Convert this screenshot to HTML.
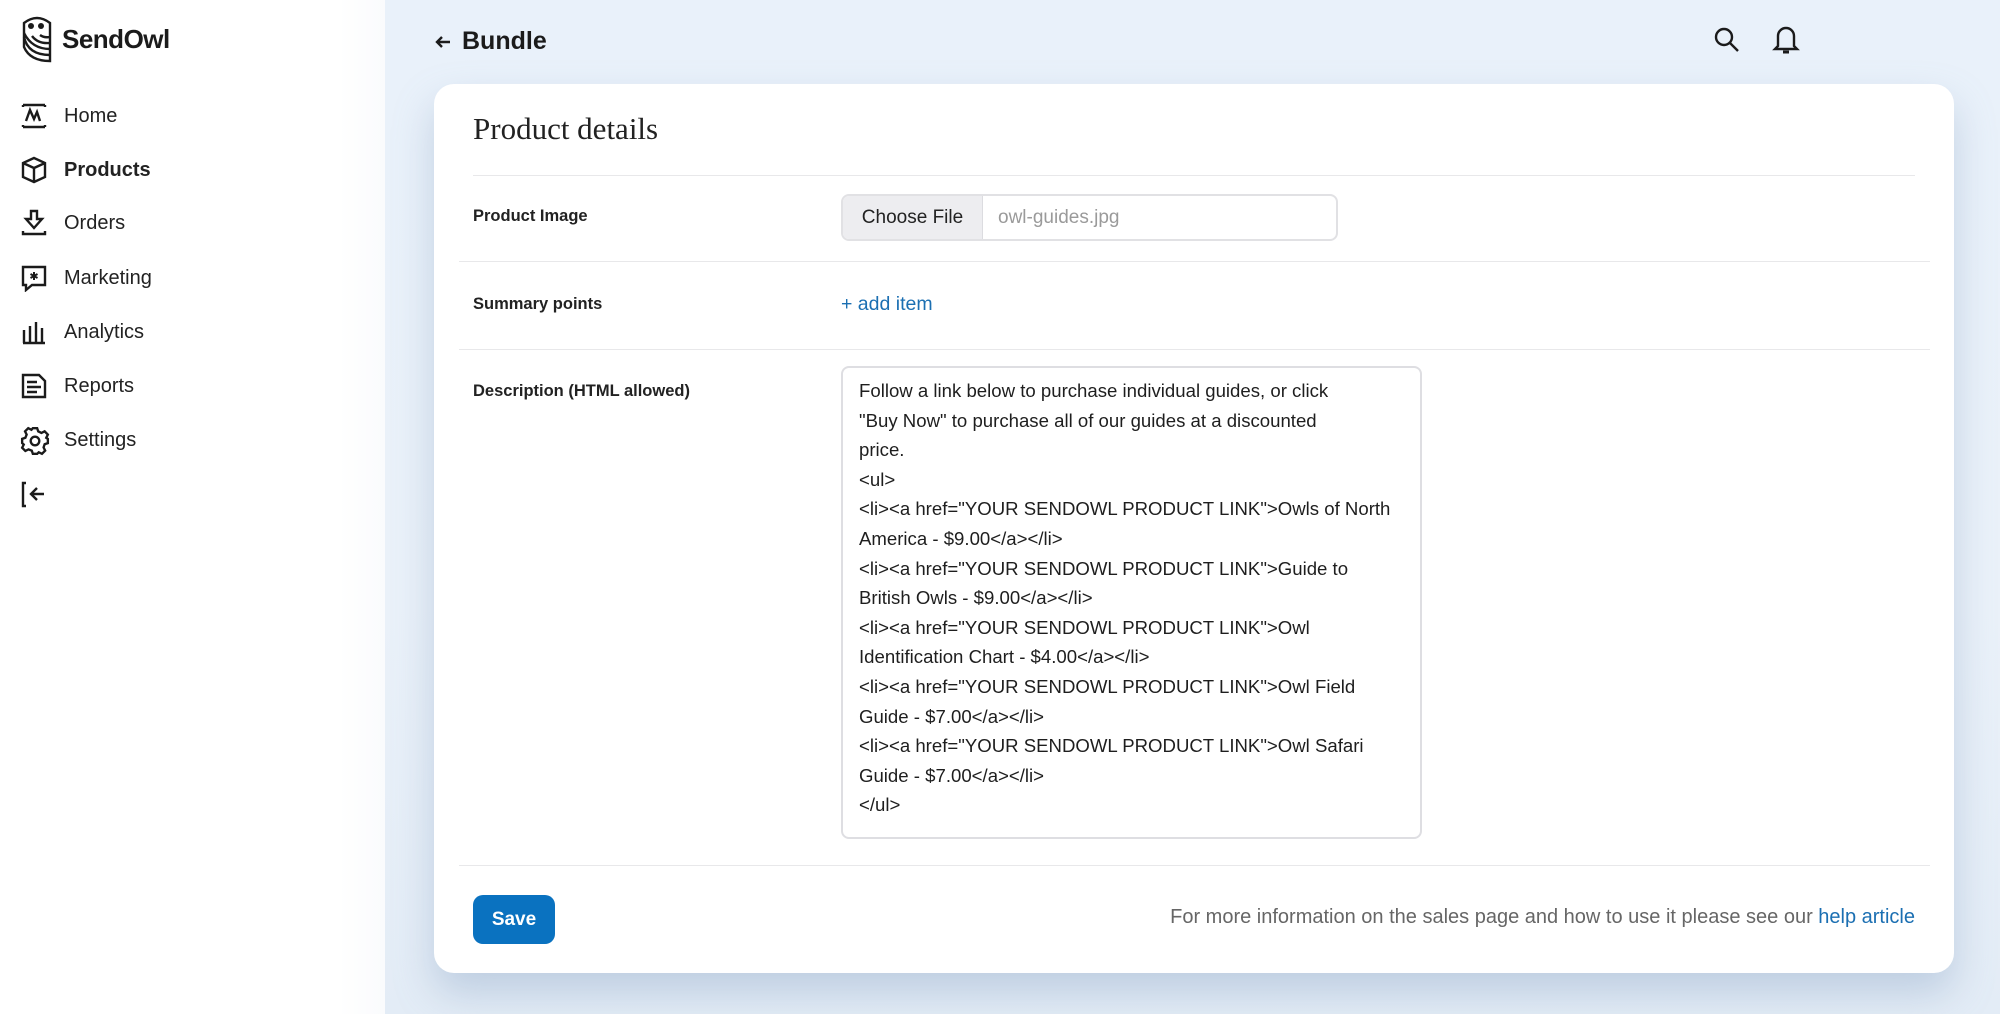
<!DOCTYPE html>
<html><head><meta charset="utf-8"><style>
*{box-sizing:border-box;margin:0;padding:0}
body{width:2000px;height:1014px;overflow:hidden;font-family:"Liberation Sans",sans-serif;color:#1b1b1b;background:linear-gradient(180deg,#e9f1fa 0%,#eaf1f9 60%,#e3ecf6 100%);position:relative}
.side{position:absolute;left:0;top:0;width:385px;height:1014px;background:linear-gradient(90deg,#fff 0%,#fff 88%,#fafbfd 100%)}
.logo{position:absolute;left:20px;top:15px}
.brand{position:absolute;left:62px;top:24px;font-size:26px;font-weight:bold;letter-spacing:-0.5px}
.nav{position:absolute;left:0;width:385px;height:40px}
.nav svg{position:absolute;left:20px;top:6px}
.nav span{position:absolute;left:64px;top:9px;font-size:20px;color:#222}
.hdr{position:absolute;left:434px;top:27px;font-size:25px;font-weight:bold;display:flex;align-items:center}
.card{position:absolute;left:434px;top:84px;width:1520px;height:889px;background:#fff;border-radius:20px;box-shadow:0 20px 40px rgba(120,150,185,.35)}
.h1{position:absolute;left:39px;top:27px;font-family:"Liberation Serif",serif;font-size:31px;color:#222}
.hr{position:absolute;height:1px;background:#e8e8ea}
.lbl{position:absolute;left:39px;font-size:16.5px;font-weight:bold;color:#222}
.file{position:absolute;left:407px;top:110px;width:497px;height:47px;border:2px solid #e1e1e4;border-radius:8px;overflow:hidden}
.file .b{position:absolute;left:0;top:0;width:140px;height:100%;background:#ededf0;border-right:1px solid #dcdce0;font-size:19px;line-height:43px;text-align:center;color:#222}
.file .n{position:absolute;left:155px;top:0;line-height:43px;font-size:19px;color:#9a9a9a}
.add{position:absolute;left:407px;top:209px;font-size:19.5px;color:#1b6fb2}
.ta{position:absolute;left:407px;top:282px;width:581px;height:473px;border:2px solid #dedee2;border-radius:8px;padding:8px 0 0 16px;font-size:18.6px;line-height:29.6px;white-space:pre;color:#1e1e1e}
.save{position:absolute;left:39px;top:811px;width:82px;height:49px;background:#0a72c0;border-radius:10px;color:#fff;font-weight:bold;font-size:19px;text-align:center;line-height:49px}
.foot{position:absolute;right:39px;top:822px;font-size:20px;color:#666}
.foot a{color:#1b6fb2;text-decoration:none}
</style></head><body>
<div class="side">
<svg class="logo" width="34" height="48" viewBox="0 0 34 48" fill="none" stroke="#1b1b1b" stroke-width="2.4">
<path d="M4 8 Q17 -2 30 8 L30 46 Q10 46 4 32 Z"/>
<circle cx="11" cy="11" r="3" fill="#1b1b1b" stroke="none"/><circle cx="21" cy="11" r="3" fill="#1b1b1b" stroke="none"/>
<path d="M4 22 Q8 40 30 40"/><path d="M4 18 Q12 34 30 34"/><path d="M12 21 Q18 29 30 28"/><path d="M20 20 Q24 23 30 22"/>
</svg>
<div class="brand">SendOwl</div>
<div class="nav" style="top:96px"><svg width="28" height="28" viewBox="0 0 28 28" fill="none" stroke="#1b1b1b" stroke-width="2.4"><path d="M3 3h22M3 3v2M25 3v2M3 25h22M3 25v-2M25 25v-2M6 19l4-11 4 9 3-7 3 9"/></svg><span>Home</span></div>
<div class="nav" style="top:150px"><svg width="28" height="28" viewBox="0 0 28 28" fill="none" stroke="#1b1b1b" stroke-width="2.4"><path d="M14 2 25 7v14l-11 5-11-5V7z M3 7l11 5 11-5 M14 12v14"/></svg><span style="font-weight:bold">Products</span></div>
<div class="nav" style="top:203px"><svg width="28" height="28" viewBox="0 0 28 28" fill="none" stroke="#1b1b1b" stroke-width="2.4"><path d="M11 2h6v8h5l-8 9-8-9h5z M3 22v3h22v-3"/></svg><span>Orders</span></div>
<div class="nav" style="top:258px"><svg width="28" height="28" viewBox="0 0 28 28" fill="none" stroke="#1b1b1b" stroke-width="2.4"><path d="M3 3h22v18H12l-6 5v-5H3z"/><path d="M14 8v8M10.5 10l7 4M17.5 10l-7 4" stroke-width="2"/></svg><span>Marketing</span></div>
<div class="nav" style="top:312px"><svg width="28" height="28" viewBox="0 0 28 28" fill="none" stroke="#1b1b1b" stroke-width="2.4"><path d="M3 25h22M4 12v13M10 8v17M16 4v21M22 10v15"/></svg><span>Analytics</span></div>
<div class="nav" style="top:366px"><svg width="28" height="28" viewBox="0 0 28 28" fill="none" stroke="#1b1b1b" stroke-width="2.4"><path d="M3 3h16l6 6v16H3z M7 10h10M7 15h14M7 20h10"/></svg><span>Reports</span></div>
<div class="nav" style="top:420px"><svg width="30" height="30" viewBox="0 0 28 28" fill="none" stroke="#1b1b1b" stroke-width="2.2"><circle cx="14" cy="14" r="4"/><path d="M12 2h4l1 3 3 1.5 3-1.5 3 3-1.5 3L26 12v4l-3 1-1 3 1.5 3-3 3-3-1.5L16 26h-4l-1-3-3-1.2-3 1.5-3-3 1.5-3L2 16v-4l3-1 1.2-3-1.5-3 3-3 3 1.5z"/></svg><span>Settings</span></div>
<div class="nav" style="top:474px"><svg width="28" height="28" viewBox="0 0 28 28" fill="none" stroke="#1b1b1b" stroke-width="2.4"><path d="M6 3H3v23h3M24 14H12M17 8l-6 6 6 6"/></svg></div>
</div>
<div class="hdr"><svg width="18" height="18" viewBox="0 0 18 18" fill="none" stroke="#1b1b1b" stroke-width="2.4" style="margin-right:10px"><path d="M16 9H3M8 4 3 9l5 5"/></svg>Bundle</div>
<svg style="position:absolute;left:1713px;top:26px" width="28" height="28" viewBox="0 0 28 28" fill="none" stroke="#1b1b1b" stroke-width="2.4"><circle cx="11" cy="11" r="8"/><path d="M17 17l8 8"/></svg>
<svg style="position:absolute;left:1772px;top:24px" width="28" height="32" viewBox="0 0 28 32" fill="none" stroke="#1b1b1b" stroke-width="2.4"><path d="M6 22V12a8 8 0 0 1 16 0v10l3 3H3z"/><path d="M11 28h6" stroke-width="3"/></svg>
<div class="card">
<div class="h1">Product details</div>
<div class="hr" style="left:39px;right:39px;top:91px"></div>
<div class="lbl" style="top:123px">Product Image</div>
<div class="file"><div class="b">Choose File</div><div class="n">owl-guides.jpg</div></div>
<div class="hr" style="left:25px;right:24px;top:177px"></div>
<div class="lbl" style="top:211px">Summary points</div>
<div class="add">+ add item</div>
<div class="hr" style="left:25px;right:24px;top:265px"></div>
<div class="lbl" style="top:298px">Description (HTML allowed)</div>
<div class="ta">Follow a link below to purchase individual guides, or click
"Buy Now" to purchase all of our guides at a discounted
price.
&lt;ul&gt;
&lt;li&gt;&lt;a href="YOUR SENDOWL PRODUCT LINK"&gt;Owls of North
America - $9.00&lt;/a&gt;&lt;/li&gt;
&lt;li&gt;&lt;a href="YOUR SENDOWL PRODUCT LINK"&gt;Guide to
British Owls - $9.00&lt;/a&gt;&lt;/li&gt;
&lt;li&gt;&lt;a href="YOUR SENDOWL PRODUCT LINK"&gt;Owl
Identification Chart - $4.00&lt;/a&gt;&lt;/li&gt;
&lt;li&gt;&lt;a href="YOUR SENDOWL PRODUCT LINK"&gt;Owl Field
Guide - $7.00&lt;/a&gt;&lt;/li&gt;
&lt;li&gt;&lt;a href="YOUR SENDOWL PRODUCT LINK"&gt;Owl Safari
Guide - $7.00&lt;/a&gt;&lt;/li&gt;
&lt;/ul&gt;</div>
<div class="hr" style="left:25px;right:24px;top:781px"></div>
<div class="save">Save</div>
<div class="foot">For more information on the sales page and how to use it please see our <a>help article</a></div>
</div>
</body></html>
